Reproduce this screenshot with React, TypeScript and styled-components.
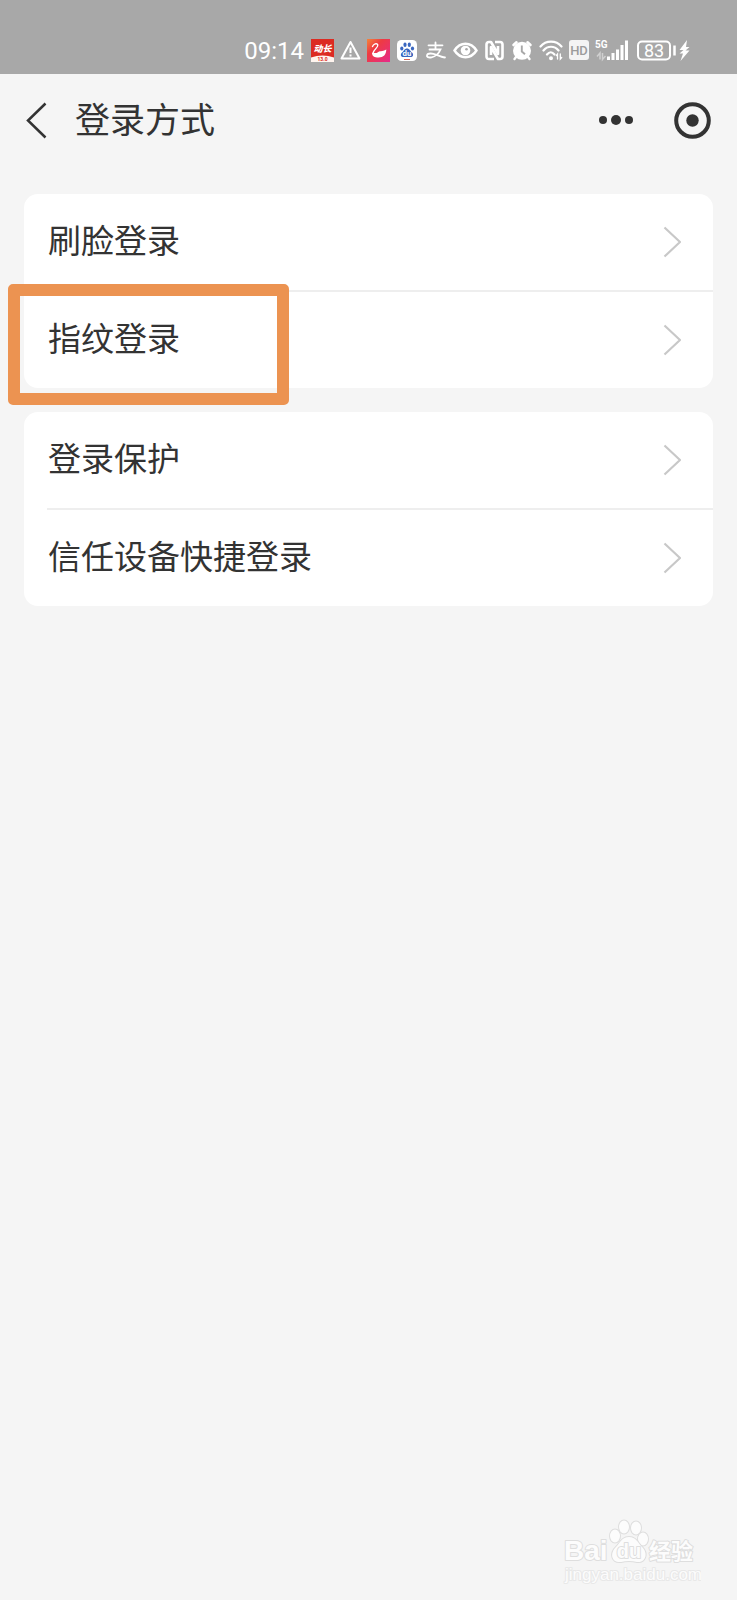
import React from "react";
import styled, { createGlobalStyle } from "styled-components";

const GlobalStyle = createGlobalStyle`
  * { box-sizing: border-box; }
  body {
    margin: 0;
    background: #f5f5f5;
    color: #333;
    font-family: "Noto Sans CJK SC", sans-serif;
  }
`;

const Page = styled.div`
  position: relative;
  min-height: 100vh;
`;

const StatusBar = styled.div`
  display: flex;
  justify-content: flex-end;
  align-items: center;
  gap: 6px;
  height: 74px;
  padding: 27px 46px 0 0;
  background: #a8a8a8;
  color: #fff;
  svg { flex: none; display: block; }
`;

const Clock = styled.time`
  font: 400 24px/24px Roboto, sans-serif;
  margin-right: 1px;
`;

const NavBar = styled.header`
  display: flex;
  align-items: center;
  height: 92px;
  padding: 0 24px 0 23px;
`;

const IconButton = styled.button`
  display: flex;
  padding: 0;
  border: 0;
  background: none;
  color: inherit;
  cursor: pointer;
`;

const Title = styled.h1`
  flex: 1;
  margin: 0 0 0 26px;
  padding-bottom: 4px;
  font-size: 35px;
  line-height: 48px;
  font-weight: 400;
`;

const Actions = styled.div`
  display: flex;
  align-items: center;
  gap: 40px;
  padding-right: 2px;
`;

const Groups = styled.main`
  display: flex;
  flex-direction: column;
  gap: 24px;
  padding: 28px 24px;
`;

const Card = styled.ul`
  margin: 0;
  padding: 0;
  list-style: none;
  background: #fff;
  border-radius: 14px;
`;

const Item = styled.li`
  position: relative;
  & + &::before {
    content: "";
    display: block;
    height: 2px;
    margin-left: 23px;
    background: #eee;
  }
`;

const RowLink = styled.a`
  display: flex;
  align-items: center;
  justify-content: space-between;
  padding: 24px 32px 24px 24px;
  font-size: 33px;
  line-height: 42px;
  color: inherit;
  text-decoration: none;
`;

const RowLabel = styled.span`
  padding-bottom: 6px;
`;

const Highlight = styled.span`
  position: absolute;
  top: -6px;
  left: -16px;
  width: 281px;
  height: 121px;
  border: 12px solid #ec9351;
  border-radius: 5px;
  pointer-events: none;
`;

const Watermark = styled.svg`
  position: absolute;
  right: 36px;
  bottom: 12px;
`;

const AppBadge = () => (
  <svg width="23" height="23" viewBox="0 0 23 23">
    <rect width="23" height="23" fill="#dc2b22" />
    <path d="M0 18.500Q11.500 14.500 23 18.500V23H0Z" fill="#fff5ef" />
    <text x="11.500" y="13" textAnchor="middle" fontSize="9" fontWeight="900" fontStyle="italic" fill="#fff" fontFamily="Noto Sans CJK SC, sans-serif">动长</text>
    <text x="11.500" y="22" textAnchor="middle" fontSize="5" fontWeight="700" fill="#dc2b22" fontFamily="Roboto, sans-serif">13.0</text>
  </svg>
);

const WarningIcon = () => (
  <svg width="21" height="23" viewBox="0 0 21 23" fill="none" stroke="#fff" strokeWidth="2" strokeLinejoin="round">
    <path d="M10.500 3L19.500 19.500H1.500Z" />
    <path d="M10.500 8.500V14M10.500 15.500V17.500" />
  </svg>
);

const SwanIcon = () => (
  <svg width="23" height="23" viewBox="0 0 23 23">
    <defs>
      <linearGradient id="swan" x1="0" y1="0" x2="1" y2="1">
        <stop offset="0" stopColor="#f5853a" />
        <stop offset="0.350" stopColor="#ee3b42" />
        <stop offset="1" stopColor="#e62a8b" />
      </linearGradient>
    </defs>
    <rect width="23" height="23" fill="url(#swan)" />
    <path d="M5.500 7.500C6.500 5 10 3.500 10.800 6C11.300 8.500 6.500 10.500 5.800 14.500" fill="none" stroke="#fff" strokeWidth="1.400" strokeLinecap="round" />
    <path d="M5.200 14C7 13.200 8.500 15 10.500 13.500C12.500 11.500 15 13 19.300 10.500C19.300 15.500 16.500 18.500 11.500 18.500C7.500 18.500 5 17.500 5.200 14Z" fill="#fff" />
  </svg>
);

const BaiduIcon = () => (
  <svg width="22" height="23" viewBox="0 0 22 23">
    <rect x="1" y="1" width="20" height="21" rx="4.500" fill="#fff" />
    <g fill="#3a67c0">
      <ellipse cx="5.800" cy="9.500" rx="1.600" ry="2" />
      <ellipse cx="9" cy="5.800" rx="1.600" ry="2.200" />
      <ellipse cx="13.300" cy="5.800" rx="1.600" ry="2.200" />
      <ellipse cx="16.500" cy="9.500" rx="1.600" ry="2" />
      <path d="M11 9.500C13.500 9.500 14 12 16 13.500C18.500 16 16.500 18.500 14 18H8C5.500 18.500 3.500 16 6 13.500C8 12 8.500 9.500 11 9.500Z" />
    </g>
    <text x="11" y="17" textAnchor="middle" fontSize="7" fontWeight="700" fill="#fff" fontFamily="Inter, sans-serif">du</text>
    <path d="M8 20.500H14" stroke="#d96557" strokeWidth="1" />
  </svg>
);

const AlipayIcon = () => (
  <svg width="23" height="23" viewBox="0 0 23 23" fill="none" stroke="#fff" strokeLinecap="round">
    <path d="M4.500 6.300H18.500M11.500 3.500V10" strokeWidth="1.800" />
    <path d="M5.500 10.500H16.500C15 14 11.500 17.500 7.500 18.300C4.500 19 2.500 17.800 3 16.300C4 13.500 9 14.500 12.500 15.800C15.500 17 18.500 18.200 21 18.500" strokeWidth="1.800" />
  </svg>
);

const EyeIcon = () => (
  <svg width="25" height="23" viewBox="0 0 25 23">
    <path d="M1.500 11.500C5 6 9 4.800 12.500 4.800S20 6 23.500 11.500C20 17 16 18.200 12.500 18.200S5 17 1.500 11.500Z" fill="none" stroke="#fff" strokeWidth="2.400" />
    <circle cx="12.500" cy="11.500" r="4.800" fill="#fff" />
    <circle cx="13.500" cy="10.300" r="1.300" fill="#a8a8a8" />
  </svg>
);

const NfcIcon = () => (
  <svg width="21" height="23" viewBox="0 0 21 23" fill="none" stroke="#fff" strokeLinejoin="round">
    <path d="M10 20H5Q2.500 20 2.500 17.500V5.500Q2.500 3 5 3H7L14 15V7" strokeWidth="2.600" />
    <path d="M11 3H16Q18.500 3 18.500 5.500V17.500Q18.500 20 16 20H14L7 8V16" strokeWidth="2.600" />
  </svg>
);

const AlarmIcon = () => (
  <svg width="22" height="23" viewBox="0 0 22 23">
    <path d="M2.500 6L5.500 3.300M19.500 6L16.500 3.300" stroke="#fff" strokeWidth="2.600" strokeLinecap="round" />
    <path d="M5 18L3.500 20M17 18L18.500 20" stroke="#fff" strokeWidth="2.400" strokeLinecap="round" />
    <circle cx="11" cy="11.800" r="9" fill="#fff" />
    <path d="M10.800 6.500V12.500L14 15.300" fill="none" stroke="#a8a8a8" strokeWidth="1.900" />
  </svg>
);

const WifiIcon = () => (
  <svg width="24" height="23" viewBox="0 0 24 23" fill="none" stroke="#fff" strokeWidth="2.200" strokeLinecap="round">
    <path d="M1.500 7.500C7 1 17 1 22.500 7.500M4.500 11.500C8.500 6.500 15.500 6.500 19.500 11.500M8 15.500C10.500 12.500 13 12.500 15.500 15.500" />
    <circle cx="12" cy="19.300" r="0.900" fill="#fff" />
    <path d="M18.500 20V15L17.300 16.500M21.300 15V20L22.700 18.500" strokeWidth="1.300" />
  </svg>
);

const HdIcon = () => (
  <svg width="20" height="23" viewBox="0 0 20 23">
    <rect y="1" width="20" height="20" rx="3" fill="#f4f4f4" />
    <text x="10" y="15.500" textAnchor="middle" fontSize="13" fontWeight="500" fill="#9c9c9c" fontFamily="Roboto, sans-serif">HD</text>
  </svg>
);

const SignalIcon = () => (
  <svg width="34" height="23" viewBox="0 0 34 23">
    <text x="0" y="9" fontSize="10" fontWeight="700" fill="#fff" fontFamily="Roboto, sans-serif">5G</text>
    <path d="M5 20.500V14L2 17.500M7.500 14V20.500L10.500 17" fill="none" stroke="#d0d0d0" strokeWidth="1.500" />
    <path d="M13.500 21V17.500M18 21V14M22.500 21V10.500M27 21V6M31.500 21V1.500" stroke="#fff" strokeWidth="3" />
  </svg>
);

const BatteryIcon = () => (
  <svg width="56" height="23" viewBox="0 0 56 23">
    <rect x="3" y="2.500" width="32" height="18" rx="4" fill="none" stroke="#fff" strokeWidth="2" />
    <text x="19" y="17.800" textAnchor="middle" fontSize="18" fontWeight="400" fill="#fff" fontFamily="Roboto, sans-serif">83</text>
    <path d="M39.500 6.500V16.500" stroke="#fff" strokeWidth="2.500" />
    <path d="M52 1L44.500 11H48.500L44.500 14.500H48L45.500 22L54.500 11.500H50.500L54.500 8H51Z" fill="#fff" />
  </svg>
);

const BackIcon = () => (
  <svg width="26" height="40" viewBox="0 0 26 40" fill="none" stroke="#333" strokeWidth="2.500">
    <path d="M22.500 3.500L5 20.500L22.500 37.500" />
  </svg>
);

const MoreIcon = () => (
  <svg width="36" height="36" viewBox="0 0 36 36" fill="#333">
    <circle cx="5" cy="18" r="4" />
    <circle cx="18" cy="18" r="5" />
    <circle cx="31" cy="18" r="4" />
  </svg>
);

const TargetIcon = () => (
  <svg width="37" height="37" viewBox="0 0 37 37">
    <circle cx="18.500" cy="18.500" r="16.300" fill="none" stroke="#333" strokeWidth="4" />
    <circle cx="18.500" cy="18.500" r="6.200" fill="#333" />
  </svg>
);

const ChevronIcon = () => (
  <svg width="18" height="32" viewBox="0 0 18 32" fill="none" stroke="#c8c8c8" strokeWidth="2.200">
    <path d="M1.500 1.500L17 16L1.500 30.500" />
  </svg>
);

const BaiduWatermark = () => (
  <Watermark width="140" height="70" viewBox="0 0 140 70" fill="#fcfcfc" stroke="#dedede" strokeWidth="2" paintOrder="stroke" strokeLinejoin="round">
    <text x="3" y="42" fontSize="28" fontWeight="700" fontFamily="Liberation Sans, sans-serif">Bai</text>
    <g strokeWidth="2">
      <ellipse cx="54" cy="18" rx="5" ry="6.500" />
      <ellipse cx="63" cy="9" rx="5" ry="6.500" />
      <ellipse cx="75" cy="10" rx="5" ry="6.500" />
      <ellipse cx="82" cy="21" rx="5" ry="6.500" />
      <path d="M68 19C75 19 77 25 81 29C88 36 84 45 76 44Q68 42 60 44C51 45 48 36 55 29C59 25 61 19 68 19Z" />
    </g>
    <text x="68" y="40" textAnchor="middle" fontSize="20" fontWeight="700" fontFamily="Liberation Sans, sans-serif">du</text>
    <text x="88" y="41" fontSize="22" fontWeight="700" fontFamily="Noto Sans CJK SC, sans-serif">经验</text>
    <text x="4" y="62" fontSize="17" stroke="#e8e8e8" fontFamily="Liberation Sans, sans-serif">jingyan.baidu.com</text>
  </Watermark>
);

const groups = [
  [{ label: "刷脸登录" }, { label: "指纹登录", highlighted: true }],
  [{ label: "登录保护" }, { label: "信任设备快捷登录" }],
];

export default function App() {
  return (
    <Page>
      <GlobalStyle />
      <StatusBar>
        <Clock>09:14</Clock>
        <AppBadge />
        <WarningIcon />
        <SwanIcon />
        <BaiduIcon />
        <AlipayIcon />
        <EyeIcon />
        <NfcIcon />
        <AlarmIcon />
        <WifiIcon />
        <HdIcon />
        <SignalIcon />
        <BatteryIcon />
      </StatusBar>
      <NavBar>
        <IconButton aria-label="返回"><BackIcon /></IconButton>
        <Title>登录方式</Title>
        <Actions>
          <IconButton aria-label="更多"><MoreIcon /></IconButton>
          <IconButton aria-label="关闭"><TargetIcon /></IconButton>
        </Actions>
      </NavBar>
      <Groups>
        {groups.map((items, i) => (
          <Card key={i}>
            {items.map((item) => (
              <Item key={item.label}>
                <RowLink href="#">
                  <RowLabel>{item.label}</RowLabel>
                  <ChevronIcon />
                </RowLink>
                {"highlighted" in item && <Highlight />}
              </Item>
            ))}
          </Card>
        ))}
      </Groups>
      <BaiduWatermark />
    </Page>
  );
}
